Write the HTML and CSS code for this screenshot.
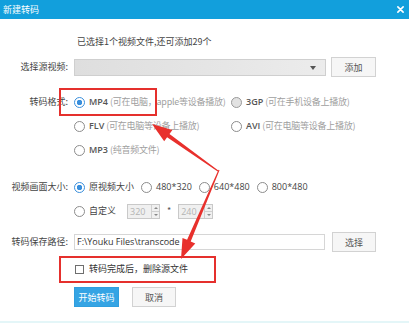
FILE: index.html
```html
<!DOCTYPE html>
<html lang="zh-CN">
<head>
    <meta charset="UTF-8">
    <title>新建转码</title>
    <link rel="stylesheet" href="styles.css">
</head>
<body>
    <div class="window">
        <div class="titlebar">
            <span class="title">新建转码</span>
            <svg class="close" viewBox="0 0 8 8"><path d="M1 1 L7 7 M7 1 L1 7" stroke="#fff" stroke-width="1.8" stroke-linecap="round"/></svg>
        </div>

        <p class="info">已选择1个视频文件,还可添加29个</p>

        <div class="row row-source">
            <span class="label">选择源视频:</span>
            <div class="select"><span class="select-arrow"></span></div>
            <button class="btn btn-add">添加</button>
        </div>

        <div class="row row-top row-format">
            <span class="label">转码格式:</span>
            <div class="format-grid">
                <span class="option"><i class="radio checked"></i><b>MP4</b><em>(可在电脑，apple等设备播放)</em></span>
                <span class="option"><i class="radio hover"></i><b>3GP</b><em>(可在手机设备上播放)</em></span>
                <span class="option"><i class="radio"></i><b>FLV</b><em>(可在电脑等设备上播放)</em></span>
                <span class="option"><i class="radio"></i><b>AVI</b><em>(可在电脑等设备上播放)</em></span>
                <span class="option"><i class="radio"></i><b>MP3</b><em>(纯音频文件)</em></span>
            </div>
        </div>

        <div class="row row-top row-size">
            <span class="label">视频画面大小:</span>
            <div class="size-list">
                <div class="size-line">
                    <span class="option"><i class="radio checked"></i><span>原视频大小</span></span>
                    <span class="option"><i class="radio"></i><span>480*320</span></span>
                    <span class="option"><i class="radio"></i><span>640*480</span></span>
                    <span class="option"><i class="radio"></i><span>800*480</span></span>
                </div>
                <div class="size-line">
                    <span class="option"><i class="radio"></i><span>自定义</span></span>
                    <div class="spin spin-w"><span class="spin-val">320</span><span class="spin-btns"><i class="up"></i><i class="down"></i></span></div>
                    <span class="times">*</span>
                    <div class="spin spin-h"><span class="spin-val">240</span><span class="spin-btns"><i class="up"></i><i class="down"></i></span></div>
                </div>
            </div>
        </div>

        <div class="row row-path">
            <span class="label">转码保存路径:</span>
            <div class="path-input">F:\Youku Files\transcode</div>
            <button class="btn btn-choose">选择</button>
        </div>

        <div class="row row-check">
            <span class="label"></span>
            <i class="checkbox"></i>
            <span class="check-text">转码完成后，删除源文件</span>
        </div>

        <div class="row row-actions">
            <span class="label"></span>
            <button class="btn btn-primary">开始转码</button>
            <button class="btn btn-cancel">取消</button>
        </div>

        <!-- annotations -->
        <div class="mark mark-format"></div>
        <div class="mark mark-check"></div>
        <svg class="arrows" viewBox="0 0 409 323">
            <path d="M152 124 L172.4 129.9 L169.5 134 L218.3 170.6 L217.7 171.4 L167.1 137.2 L164.2 141.3 Z" fill="#e8302c"/>
            <path d="M181 259 L195.3 243.4 L190.7 241.4 L219.5 170.2 L218.5 169.8 L187.1 239.8 L182.5 237.9 Z" fill="#e8302c"/>
        </svg>
    </div>
</body>
</html>
```

FILE: styles.css
```css
* {
    box-sizing: border-box;
}
body {
    margin: 0;
    background: #fff;
    font-family: "Noto Sans CJK SC", "Noto Sans", sans-serif;
    font-size: 9px;
    line-height: 14px;
    color: #444;
}
.window {
    position: relative;
    width: 409px;
    height: 323px;
    overflow: hidden;
    border-bottom: 2px solid #e4f6f8;
}
.titlebar {
    height: 19px;
    background: #129fdc;
    color: #fff;
    display: flex;
    align-items: center;
    justify-content: space-between;
    padding: 0 5px 0 3px;
}
.close {
    width: 7px;
    height: 7px;
}
.info {
    margin: 16px 0 0 77px;
    line-height: 14px;
}
.row {
    display: flex;
    align-items: center;
}
.row-top {
    align-items: flex-start;
}
.label {
    flex: none;
    width: 68px;
    margin-right: 6px;
    text-align: right;
    line-height: 24px;
}
.row-source {
    margin-top: 8px;
    height: 20px;
}
.select {
    position: relative;
    width: 252px;
    height: 17px;
    border: 1px solid #cfcfcf;
    background: linear-gradient(to right, #dedede, #e6e6e6 60%, #ececec);
}
.select-arrow {
    position: absolute;
    right: 9px;
    top: 6px;
    border-top: 4px solid #555;
    border-left: 3px solid transparent;
    border-right: 3px solid transparent;
}
.btn {
    height: 20px;
    padding: 0;
    border: 1px solid #d2d2d2;
    background: #f6f6f6;
    color: #555;
    font-family: inherit;
    font-size: 9px;
}
.btn-add {
    width: 45px;
    margin-left: 5px;
}
.row-format {
    margin-top: 13px;
}
.format-grid {
    display: grid;
    grid-template-columns: 157px auto;
    grid-auto-rows: 24px;
    align-items: center;
}
.option {
    display: flex;
    align-items: center;
    white-space: nowrap;
    color: #444;
}
.option b {
    font-family: "Open Sans", "Noto Sans", sans-serif;
    font-weight: 600;
    color: #555;
}
.option em {
    font-style: normal;
    color: #a0a0a0;
    margin-left: 2px;
    letter-spacing: -0.25px;
}
.radio {
    flex: none;
    width: 11px;
    height: 11px;
    margin-right: 4px;
    border: 1px solid #8c8c8c;
    border-radius: 50%;
    background: #fff;
}
.radio.checked {
    border-color: #3a8fdc;
    background: radial-gradient(circle, #3a8fdc 0 2.5px, #fff 3px);
}
.radio.hover {
    background: #e2e2e2;
    border-color: #9a9a9a;
}
.row-size {
    margin-top: 13px;
}
.size-line {
    display: flex;
    align-items: center;
    height: 24px;
    gap: 7px;
}
.size-line .option span {
    font-family: "Open Sans", "Noto Sans CJK SC", sans-serif;
}
.spin {
    display: flex;
    height: 15px;
    border: 1px solid #c9c9c9;
    background: #f0f0f0;
    color: #b4b4b4;
    margin-left: 4px;
}
.spin-w {
    width: 33px;
}
.spin-h {
    width: 35px;
    margin-left: 0;
}
.spin-val {
    flex: 1;
    padding-left: 2px;
    line-height: 13px;
    font-family: "Open Sans", sans-serif;
}
.spin-btns {
    width: 8px;
    display: flex;
    flex-direction: column;
    border-left: 1px solid #d0d0d0;
}
.spin-btns i {
    flex: 1;
    display: flex;
    align-items: center;
    justify-content: center;
}
.spin-btns .up {
    border-bottom: 1px solid #d0d0d0;
}
.spin-btns .up::after {
    content: "";
    border-bottom: 2px solid #888;
    border-left: 2px solid transparent;
    border-right: 2px solid transparent;
}
.spin-btns .down::after {
    content: "";
    border-top: 2px solid #888;
    border-left: 2px solid transparent;
    border-right: 2px solid transparent;
}
.times {
    color: #555;
}
.row-path {
    margin-top: 9px;
    height: 20px;
}
.path-input {
    width: 251px;
    height: 16px;
    border: 1px solid #d6d6d6;
    padding-left: 2px;
    line-height: 14px;
    color: #333;
    font-family: "Open Sans", "Noto Sans", sans-serif;
}
.btn-choose {
    width: 44px;
    margin-left: 7px;
}
.row-check {
    margin-top: 7px;
    height: 20px;
}
.checkbox {
    width: 9px;
    height: 9px;
    border: 1px solid #6e6e6e;
    background: #fff;
    margin: 0 5px 0 1px;
}
.check-text {
    color: #333;
}
.row-actions {
    margin-top: 8px;
}
.btn-primary {
    width: 45px;
    border-color: #2f9ede;
    background: #35a4e4;
    color: #fff;
}
.btn-cancel {
    width: 44px;
    margin-left: 13px;
}
.mark {
    position: absolute;
    border: 2px solid #e5302d;
}
.mark-format {
    left: 59px;
    top: 88px;
    width: 98px;
    height: 28px;
}
.mark-check {
    left: 59px;
    top: 256px;
    width: 157px;
    height: 27px;
}
.arrows {
    position: absolute;
    left: 0;
    top: 0;
    width: 409px;
    height: 323px;
    pointer-events: none;
}
```
